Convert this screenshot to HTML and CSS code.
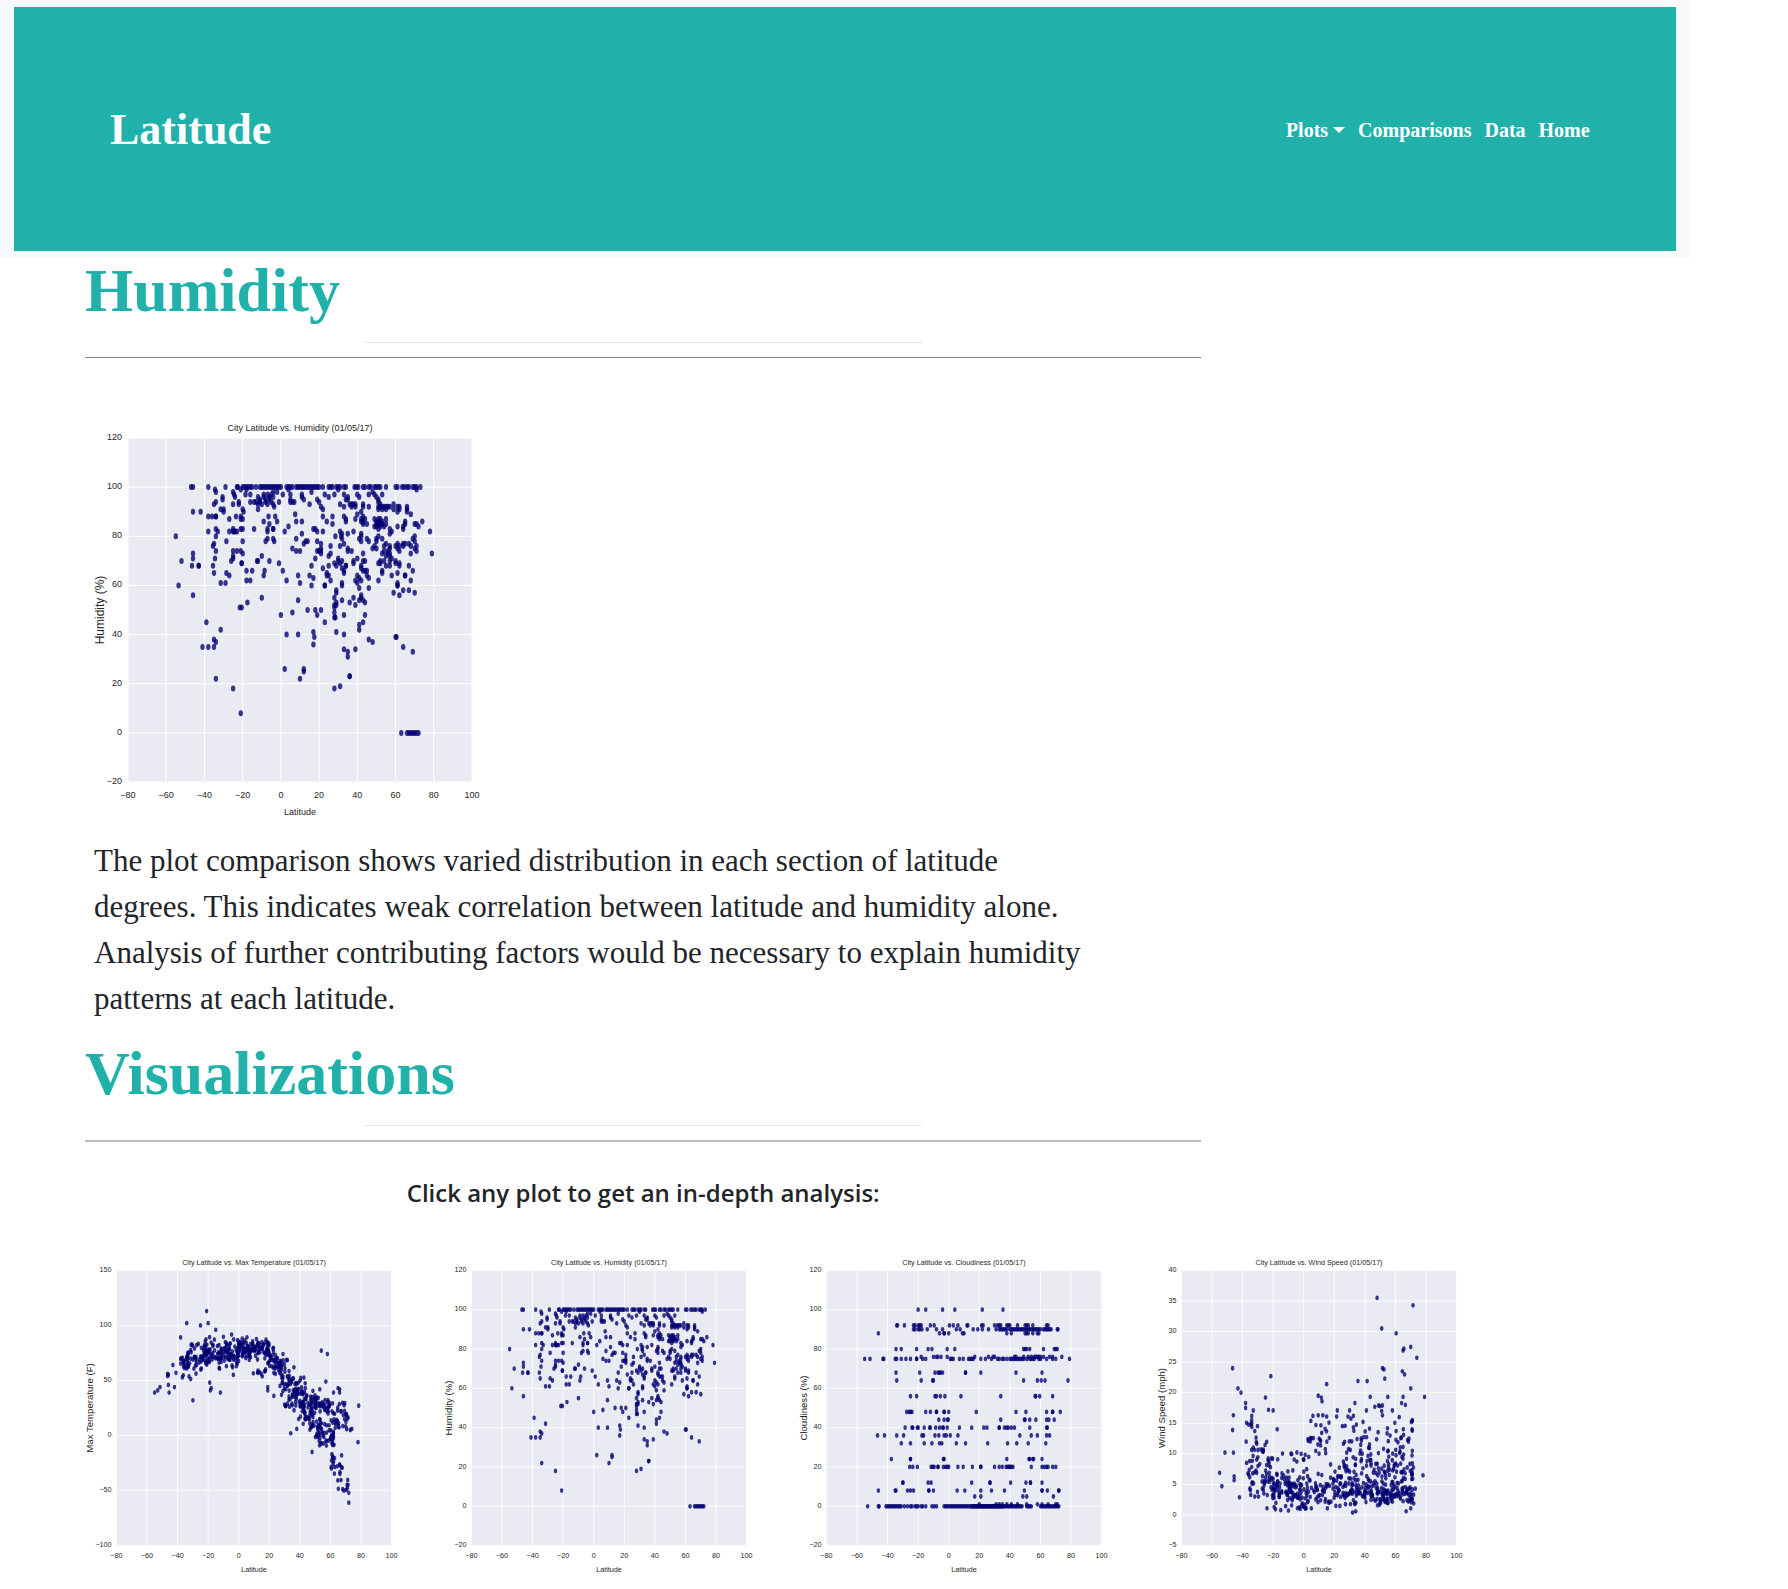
FILE: index.html
```html
<!DOCTYPE html>
<html lang="en">
<head>
<meta charset="utf-8">
<meta name="viewport" content="width=device-width, initial-scale=1">
<title>Latitude - Humidity</title>
<link rel="stylesheet" href="styles.css">
</head>
<body>
<header class="site-header">
  <div class="banner">
    <a class="brand" href="#">Latitude</a>
    <nav class="nav" aria-label="Main">
      <button class="nav-item nav-toggle" type="button" aria-haspopup="true">Plots<span class="caret"></span></button>
      <a class="nav-item" href="#">Comparisons</a>
      <a class="nav-item" href="#">Data</a>
      <a class="nav-item" href="#">Home</a>
    </nav>
  </div>
</header>
<main class="page">
  <section class="humidity">
    <div class="section-head">
      <h1 class="title">Humidity</h1>
      <hr class="rule-short">
      <hr class="rule">
    </div>
    <div class="plot plot-large" data-plot="humidity"></div>
    <p class="analysis">The plot comparison shows varied distribution in each section of latitude degrees. This indicates weak correlation between latitude and humidity alone. Analysis of further contributing factors would be necessary to explain humidity patterns at each latitude.</p>
  </section>
  <section class="visualizations">
    <div class="section-head">
      <h2 class="title">Visualizations</h2>
      <hr class="rule-short">
      <hr class="rule rule-soft">
      <h3 class="hint">Click any plot to get an in-depth analysis:</h3>
    </div>
    <div class="plot-row">
      <a class="plot" href="#temperature" data-plot="temperature"></a>
      <a class="plot" href="#humidity" data-plot="humidity"></a>
      <a class="plot" href="#cloudiness" data-plot="cloudiness"></a>
      <a class="plot" href="#wind" data-plot="wind"></a>
    </div>
  </section>
</main>
<script src="plots.js"></script>
</body>
</html>
```
FILE: styles.css
```css
* {
  box-sizing: border-box;
}

body {
  margin: 0;
  background: #fff;
  color: #212529;
  font-family: "Liberation Serif", "Times New Roman", serif;
}

.site-header {
  width: 94.5%;
  padding: 7px 14px;
  background: #f8f9fa;
}

.banner {
  display: flex;
  align-items: center;
  justify-content: space-between;
  padding: 97px 86px 95px 96px;
  background: #20b2aa;
}

.brand {
  color: #fff;
  font-size: 44px;
  font-weight: bold;
  line-height: 52px;
  text-decoration: none;
}

.nav {
  display: flex;
  align-items: center;
  gap: 13px;
}

.nav-item {
  padding: 0;
  border: 0;
  background: none;
  color: #fff;
  font-family: inherit;
  font-size: 20px;
  font-weight: bold;
  line-height: 24px;
  text-decoration: none;
}

.nav-toggle {
  display: flex;
  align-items: center;
  gap: 5px;
}

.caret {
  border: 6px solid transparent;
  border-top-color: #fff;
  border-bottom: 0;
}

.page {
  padding: 0 85px 8px;
}

.section-head {
  width: 69%;
}

.title {
  margin: 0;
  color: #20b2aa;
  font-size: 62px;
  font-weight: bold;
  line-height: 64px;
}

.rule-short {
  width: 50%;
  height: 1px;
  margin: 20px auto 14px;
  border: 0;
  background: #e8e9ea;
}

.rule {
  height: 1px;
  margin: 0;
  border: 0;
  background: #85898a;
}

.rule-soft {
  height: 2px;
  background: #bcbcbc;
}

.hint {
  margin: 35px 0 27px;
  font-family: "Open Sans", "Noto Sans", sans-serif;
  font-size: 24px;
  font-weight: 600;
  line-height: 32px;
  text-align: center;
}

.analysis {
  width: 62%;
  margin: 13px 0 19px 9px;
  font-size: 31px;
  line-height: 46px;
}

.plot {
  display: block;
}

.plot-large {
  max-width: 430px;
  margin-top: 37px;
}

.plot-row {
  display: grid;
  grid-template-columns: repeat(4, 1fr);
  gap: 11px;
  max-width: 1409px;
  margin: 0 -3px;
}

.chart {
  display: block;
  width: 100%;
  font-family: "Liberation Sans", Arial, sans-serif;
}

.chart-area {
  fill: #eaeaf2;
}

.chart-grid {
  stroke: #fff;
  stroke-width: 1;
}

.chart-dot {
  fill: #000072;
  fill-opacity: 0.78;
}

.chart-text {
  fill: #262626;
  font-size: 9px;
}

.chart-side {
  font-size: 12px;
}

.middle {
  text-anchor: middle;
}

.end {
  text-anchor: end;
}
```
FILE: plots.js
```js
// Rows are "value: latitudes"; "a..b" stands for every whole degree from a to b.
const humidityRows = `
100: -47 -46 -38 -29 -23 -22.5 -20..-15 -13 -11..0 3..6 8..20 22 25..27 29..31 33 34 38.5 39.5 40.5 43 44 46 47 49..52 55 60 61 63.5 64.5 66 67 69..71 73
99: -34.5 -21 -18 30 4 71
98: -34 -25 -4 -2 16 48
97: -24.5 -18.5 -16 -9 -7 -5 1 5 11 23 28 33 40 46 49 53
96: -30.5 -24 -12 -9 -6 -4 11 25 35 41 50
95: -30.5 -11 -8 -6 5 12 19 34 35 51
94: -34 -22 -16 -14 -13 -11 -8 -5 -1 5 6 7 20 51
93: -35 -25 -22 -12 -10 -7 -4 15 31 36..39 43 52 59
92: -3.5 21 33 37 39 43 46 51..57 61 62 66
91: -31.5 -30 -20 -12 22 51 53 55 59 62 66
90: -46 -42 -30 -19.5 42 61 66
89: 7.5 40 68
88: -38 -36 -34 -34 -23.5 -21 -6.5 -3 22 27 33 43
87: -27 -21 -20 34 39 42 44 49 51 52 55
86: -9 -2 8 11 24 34 42 43 50 51 53 65 74
85: -6 27 43 45 50..53 55 65 70 71
84: 4 49 50 52 54 61 64 72
83: -34 -25 -21 -20 -14 -7 -4 -4 17 18 51 57 64
82: -38 -33 -27 -25 -24.5 -24 -23 -7 2 19 22 31 38 58 78
81: 11 32 35 42 57
80: -55 -34 28.5 31.5 42 51 70
79: -7 -4 8 32 41 45 50 53 69
78: -28.5 -20 -8 -3.5 13 14 19 42 46 50 70
77: -35 12 21 33 55 61 64 65 67
76: -35.5 26 31 49 54 57 60 62 64 68 71
75: 6 21 35 48 50 57 61 70
74: -34 -25 -23 -21 8 10 19 20 21 35 37 54 56 62 71
73: -46 -20 21 26 43 53 56 57 68 79
72: -25 -10 25 55 57
71: -46 -34.5 -25 18 30 40 58
70: -52 -26 -12.5 -12 -6 30 32 38 43 44 52 54 57 60
69: -20.5 -20.5 -1 28 31 38 51 52 60 62
68: -46.5 -43 -43 -35.5 16 25 29 34 34 42 55 57 62 67
67: 22 32 42
66: -18 -15 -8.5 1 33 43 44 45 53 69
65: -35 -28.5 24 33 53 61
64: -27 -9 9 15 24 25 40 45 58 65 65
63: 17 41 46
62: -18 -16 3 26 39 42 51 68
61: -31.5 -29 10 32 40 61
60: -53.5 16 23 23 32 61 61
59: 41 46
58: 29 64 67
57: 29 59 70
56: -46 42 62
55: -10 28 38 42
54: 9 32 43 41
53: -17.5 29 36 44
52: 28 29 39
51: -21.5 -20.5 28
50: 14 18 21
49: 6 28
48: 0 19 33 44
47: 28 28.5
45: -39 23 43
44: 41
42: -31.5 41
41: 17 29
40: 3 9 33
39: 17.5 60 60.5
38: -35 46
37: -34 48
36: 17
35: -41 -38 -35 64
34: 33 39
33: 35 69
31: 35
26: 2 12
25: 12
23: 36 36
22: -34 10
19: 31
18: -25 28
8: -21
0: 63 66..72`;

const cloudinessRows = `
100: -20 -15 -4 4 22 35.5
92: -34 -33.5 -29 -23 -22 -20 -19 -18 -12 -9.5 0.5 3 6 12 12.5 21.5 22.5 30 32 33 34 38 39 40 45 50 51 52 55 64 65
90: -23 -22 -20 -19 -17.5 -14 -8 -4 5 7.5 16 19 22 26 31 33..38 40..60 62..67 71 71.5
88: -46 -6 -3 -3 0 9 10 38 41 50 51 52 55 58 59
80: -34.5 -31 -21 -13.5 -11 -1 4 49 50 51 53 62 69 70 71
76: -18 -10 -8 -7 -5 -1 17 26 29 30 43 44 49 52 54 56..60 62 66 68 74
75: -55 -51.5 -43 -42.5 -35 -34 -31 -28 -25 -21 -21 -17 -15 1 2 3 7 9.5 13..16 21 24 28 32 33 35 36 38 40..49 51 53..56 59 60 64 68 70 79
68: -34.5 -19 -9 -7 -6 -5.5 -4 11 11 21 44 61
64: -34 -18 -10.5 -10 49 58 60.5 63 78
56: -25 -21 -9 -8 -5.5 -2.5 8 34 56.5 57 59.5 68
48: -27.5 -26 -25 -24 -15 -12 -8 -8 -3 -3 0 18 44 50.5 64 68 68 73
44: -6.5 -3 -0.5 -0.5 34 49.5 50 53 57 64 65.5 69
40: -28.5 -24 -23.5 -20 -20.5 -16 -12.5 -12 -8.5 -6 -4 -3.5 -1 7 15 23 25 33 33 36.5 38 39 41 43 53 64 64.5
36: -46.5 -42 -34 -29.5 -17.5 -16.5 -9 -6.5 -3 -1.5 1 6 46.5 54 58 64 66
32: -31 -25 -16 -11 -6 -4.5 5 11 25.5 38.5 44.5 52 63.5
24: -37.5 -25 -25 -3.5 -3 38 52.5 53 55 55.5 61
20: -25.5 -23.5 -20.5 -11.5 -10.5 -9.5 -7 -7 -3.5 -2 -1 0 6 9.5 15.5 21 21 30 33 35 37.5 38.5 39.5 40 41 42 54 61 62.5 64 65 68 70
12: -30 -30 -13.5 -11.5 15 27 27 40.5 50.5 53.5 53.5 61
8: -46 -35 -34.5 -27 -25 -23 -13 -13 -10 5.5 10.5 21 28 36.5 49.5 61 61 64.5 72 72
5: 17 21 48.5 51 68.5
1: 20 31 33 35 38 41 45 51 58 61 65 70 71
0: -53 -46 -45.5 -41..-31 -29 -27 -25 -24 -22 -21 -20 -18 -17 -15 -11 -9.5 -8 -3..48 15..35 51..54 60..72`;

function expandRows(text) {
  return text.trim().split("\n").flatMap((row) => {
    const [value, lats] = row.split(": ");
    return lats.split(" ").flatMap((item) => {
      if (!item.includes("..")) return [[+item, +value]];
      const [from, to] = item.split("..").map(Number);
      return Array.from({ length: to - from + 1 }, (_, i) => [from + i, +value]);
    });
  });
}

// Small seeded generator so the dense clusters look the same on every load.
function seeded(seed) {
  return () => {
    seed = (seed * 1664525 + 1013904223) % 4294967296;
    return seed / 4294967296;
  };
}

// Each cluster: count, first latitude, last latitude, value at each end, spread.
function clusters(list, seed) {
  const random = seeded(seed);
  return list.flatMap(([count, from, to, start, end, spread]) =>
    Array.from({ length: count }, () => {
      const t = random();
      const offset = (random() + random() - 1) * spread;
      return [from + (to - from) * t, start + (end - start) * t + offset];
    }));
}

const temperature = [
  [-21, 113], [-34, 102], [-20, 102], [-25, 100], [-15, 96], [-38, 89], [-43, 64], [-41, 57],
  [-46.5, 56], [-46, 55], [-46.5, 54], [-46, 46], [-51.5, 44], [-42, 44], [-53, 41], [-55, 39],
  [-45.5, 39], [-30, 32], [-19, 48], [-18, 43], [-18.5, 41], [-12, 39], [-3.5, 55], [-4, 62],
  [19, 44], [19, 41], [23, 36], [27, 45], [28, 37], [30, 28], [34, 2], [38, 6], [54, 77],
  [58, 74], [57, 49], [53, 42], [78.5, 27], [78, -6], [74, 6], [73, 5], [65, 43], [66, 42],
  [66, 39], [62, 39], [48, -15], [72, -61], [72, -52], [71, -48], [24, 56], [23, 57], [29, 74],
  ...clusters([
    [18, -39, -33, 62, 68, 13], [62, -34, -20, 67, 76, 18], [105, -22, 0, 75, 77, 17],
    [100, 0, 20, 79, 78, 11], [10, 8, 21, 57, 58, 5], [50, 19, 29, 75, 61, 14],
    [100, 28, 44, 52, 32, 24], [50, 41, 50, 26, 24, 20], [42, 49, 60, 30, 27, 9],
    [50, 50, 62, 5, -2, 18], [38, 60, 72, 17, 14, 20], [28, 60, 72, -27, -38, 24],
    [10, 44, 54, 10, 8, 12],
  ], 7),
];

const wind = [
  [48, 35.5], [71.5, 34.3], [51, 30.5], [60.5, 29.7], [65.5, 27.2], [65, 26.9], [70, 27.5],
  [74, 25.7], [-46.5, 24], [-21.5, 22.7], [-43, 20.7], [-41, 20], [51.5, 24], [52.5, 23.8],
  [64.5, 23.5], [66, 23], [53, 22.3], [35.5, 21.9], [41.5, 21.9], [15, 21.4], [70, 20.7],
  [-25, 19.2], [9.5, 19.5], [11.5, 19.2], [12, 18.6], [43.5, 19.3], [55, 19.3], [65, 19.3],
  [79, 19.3], [64, 18.3], [66.5, 18], [-38, 18.3], [-38, 17.5], [-23, 17.2], [-20, 17.1],
  [-33, 17.1], [33.5, 18.3], [22, 17.1], [30, 17.1], [41, 17.1], [46.5, 17.7], [58, 17.1],
  [49, 17.9], [50, 17.8], [51.5, 17.9], [51, 17], [51.5, 16.3], [62.5, 16], [-46, 16.3],
  [-34, 16.2], [6, 16.2], [9.5, 16.3], [12.5, 16.3], [15, 16.1], [21.5, 16.1], [29, 16.1],
  [32.5, 16.2], [-46.5, 13.9], [-51.5, 10.2], [-46, 10.2], [-55, 6.9], [-53.5, 4.7],
  [-45.5, 6.3], [-45.5, 5.7], [-42, 2.9], [32, 0.4], [34, 0.6], [67, 0.6], [-15, 0.8],
  [5, 1.1], [-24, 1.1], [-4, 1.1], [15.5, 1.1], [78, 6.5], [71, 15.5], [71, 13.8],
  [71, 10.5], [70, 1.1], [73, 4.3], [-34, 15], [-34.5, 14.8], [-33, 11], [-30, 8],
  ...clusters([
    [50, -39, -16, 11, 9, 6], [32, -36, -18, 6, 4, 4], [105, -20, 3, 4, 4, 3.6],
    [14, -15, 4, 10, 10, 3], [36, 0, 16, 4, 4, 3], [22, 3, 17, 13, 12, 5],
    [190, 16, 72, 3.7, 3.5, 2.3], [100, 17, 72, 7, 7, 3.6], [70, 25, 72, 12, 12, 4.5],
  ], 21),
];

const plots = {
  temperature: { name: "Max Temperature", unit: "(F)", min: -100, max: 150, step: 50, labelX: 14, points: temperature },
  humidity: { name: "Humidity", unit: "(%)", min: -20, max: 120, step: 20, labelX: 19, points: expandRows(humidityRows) },
  cloudiness: { name: "Cloudiness", unit: "(%)", min: -20, max: 120, step: 20, labelX: 19, points: expandRows(cloudinessRows) },
  wind: { name: "Wind Speed", unit: "(mph)", min: -5, max: 40, step: 5, labelX: 23, points: wind },
};

const left = 43, upper = 43, size = 344;

function label(value) {
  return String(value).replace("-", "\u2212");
}

function draw(plot) {
  const x = (lat) => left + ((lat + 80) / 180) * size;
  const y = (v) => upper + ((plot.max - v) / (plot.max - plot.min)) * size;
  const middle = left + size / 2;
  let grid = "", ticks = "";
  for (let lat = -80; lat <= 100; lat += 20) {
    grid += `<path class="chart-grid" d="M${x(lat)} ${upper}v${size}"/>`;
    ticks += `<text class="chart-text middle" x="${x(lat)}" y="${upper + size + 16}">${label(lat)}</text>`;
  }
  for (let v = plot.min; v <= plot.max; v += plot.step) {
    grid += `<path class="chart-grid" d="M${left} ${y(v)}h${size}"/>`;
    ticks += `<text class="chart-text end" x="${left - 6}" y="${y(v) + 2}">${label(v)}</text>`;
  }
  const dots = plot.points.map(([lat, v]) =>
    `<ellipse class="chart-dot" cx="${x(lat).toFixed(1)}" cy="${y(v).toFixed(1)}" rx="2.2" ry="3"/>`).join("");
  const title = `City Latitude vs. ${plot.name} (01/05/17)`;
  return `<svg class="chart" viewBox="0 0 430 430" role="img" aria-label="${title}">
    <rect class="chart-area" x="${left}" y="${upper}" width="${size}" height="${size}"/>
    ${grid}${dots}${ticks}
    <text class="chart-text middle" x="${middle}" y="${upper - 7}">${title}</text>
    <text class="chart-text middle" x="${middle}" y="${upper + size + 33}">Latitude</text>
    <text class="chart-text chart-side middle" transform="translate(${plot.labelX} ${upper + size / 2}) rotate(-90)">${plot.name} ${plot.unit}</text>
  </svg>`;
}

document.querySelectorAll("[data-plot]").forEach((box) => {
  box.innerHTML = draw(plots[box.dataset.plot]);
});
```
